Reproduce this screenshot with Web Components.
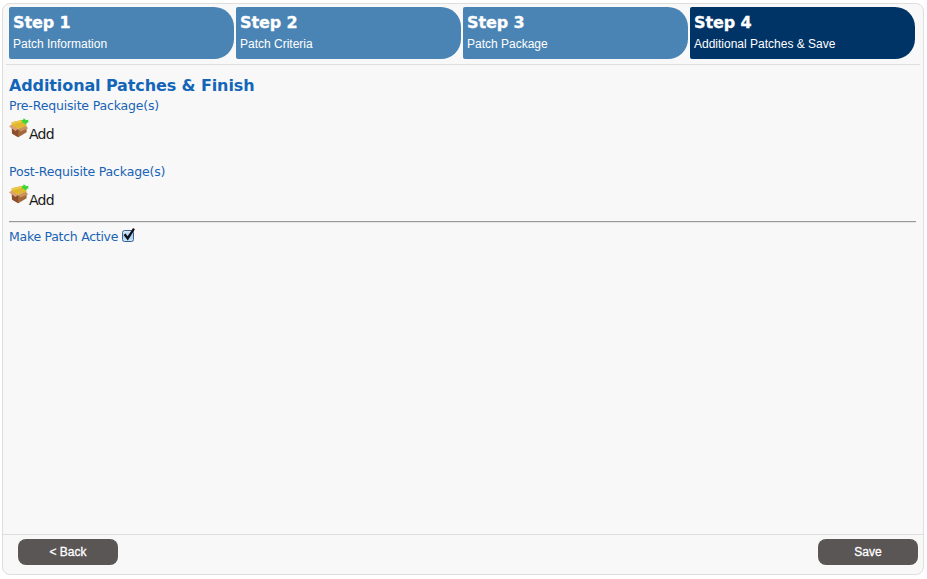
<!DOCTYPE html>
<html lang="en">
<head>
<meta charset="utf-8">
<title>Patch Wizard</title>
<style>
html,body{margin:0;height:100%;background:#fff}
body{font-family:"DejaVu Sans",sans-serif;overflow:hidden}
</style>
</head>
<body>
<wizard-frame>
  <wizard-step slot="steps" label="Step 1">Patch Information</wizard-step>
  <wizard-step slot="steps" label="Step 2">Patch Criteria</wizard-step>
  <wizard-step slot="steps" label="Step 3">Patch Package</wizard-step>
  <wizard-step slot="steps" label="Step 4" active>Additional Patches &amp; Save</wizard-step>
  <wizard-heading>Additional Patches &amp; Finish</wizard-heading>
  <package-list label="Pre-Requisite Package(s)">Add</package-list>
  <package-list label="Post-Requisite Package(s)">Add</package-list>
  <active-toggle>Make Patch Active</active-toggle>
  <wizard-button slot="footer">&lt; Back</wizard-button>
  <wizard-button slot="footer">Save</wizard-button>
</wizard-frame>
<script>
const define = (name, html) => customElements.define(name, class extends HTMLElement {
  connectedCallback() {
    if (this.shadowRoot) return;
    const root = this.attachShadow({mode: 'open'});
    root.innerHTML = html;
    const label = root.querySelector('.label');
    if (label) label.textContent = this.getAttribute('label');
  }
});

define('wizard-frame', `
<style>
:host{display:flex;flex-direction:column;box-sizing:border-box;width:922px;height:572px;margin:3px 0 0 2px;border:1px solid #dedede;border-radius:8px;background:#f8f8f8}
nav{display:flex;gap:2px;margin:0 3px;padding:3px 3px 5px;border-bottom:1px solid #dedede}
main{flex:1;padding:10px 7px 0 6px}
footer{display:flex;justify-content:space-between;box-sizing:border-box;height:40px;padding:4px 5px 0 15px;border-top:1px solid #dedede}
</style>
<nav><slot name="steps"></slot></nav>
<main><slot></slot></main>
<footer><slot name="footer"></slot></footer>`);

define('wizard-step', `
<style>
:host{display:block;box-sizing:border-box;width:225px;height:52px;padding:6px 4px 0;border-radius:2px 20px 20px 2px;background:#4a84b4;color:#fff;font:12px/14px "Liberation Sans",sans-serif;white-space:nowrap}
:host([active]){background:#003466}
.label{font:bold 16px/20px "DejaVu Sans",sans-serif;letter-spacing:-.12px;margin-bottom:4px;-webkit-text-stroke:.3px #fff}
</style>
<div class="label"></div><slot></slot>`);

define('wizard-heading', `
<style>
:host{display:block;font:bold 16px/22px "DejaVu Sans",sans-serif;letter-spacing:-.11px;color:#1366b7;white-space:nowrap}
</style>
<slot></slot>`);

define('package-list', `
<style>
:host{display:block;height:66px;white-space:nowrap}
.label{font-size:12.5px;line-height:18px;letter-spacing:-.17px;color:#1963b5}
.add{display:flex;align-items:flex-start;margin-top:3px;color:#1a1a1a;font-size:14px;line-height:18px;letter-spacing:-.75px}
svg{display:block;width:20px;height:20px}
.add span{margin-top:7px}
</style>
<div class="label"></div>
<div class="add">
<svg viewBox="0 0 20 20">
<path d="M2.4 4.2 13.5 1.8 17.8 8 4 9.5z" fill="#deb02b"/>
<path d="M2.8 9 9 11.5 17.6 8.5v5.8L9.3 19.2 3 15.6z" fill="#a5683a"/>
<path d="M2.8 9 9.2 11.5V19.2L3 15.6z" fill="#8c4f2b"/>
<path d="M0 8.5 2.8 6.2 9.2 10.6 6.6 13z" fill="#dca173"/>
<path d="M9.2 10.6 16.5 7.8 19.3 10.3 11.3 13.6z" fill="#cb935f"/>
<path d="M2.6 5.2 3.2 7.4 9.2 10.8 16.8 8 14 2.6z" fill="#e0b82f"/>
<path d="M2.6 4.4 13.5 1.9 14.2 3.8 3.2 6.2z" fill="#edc84c"/>
<path d="M14.2 .4 16.2 .9 16.6 2.2 19.6 1.7 19 3.4 20 4.2 17.8 4.8 17.3 6.4 15.4 5.8 15.3 4.5 12.4 4.7 13.5 3.2 12.2 2.3 14.3 2z" fill="#35d632"/>
</svg><span><slot></slot></span></div>`);

define('active-toggle', `
<style>
:host{display:block;font-size:12.5px;line-height:18px;letter-spacing:-.28px;color:#1963b5;white-space:nowrap}
hr{margin:-8px 0 4px;border:0;height:1px;background:#999;border-bottom:1px solid #e5e5e5}
.row{display:flex;align-items:flex-start;gap:3px}
.row span{margin-top:1px}
svg{display:block;width:15px;height:16px}
</style>
<hr>
<div class="row"><span><slot></slot></span>
<svg viewBox="0 0 15 16">
<defs><linearGradient id="g" x2="0" y2="1"><stop stop-color="#e3effb"/><stop offset=".5" stop-color="#a5cbef"/><stop offset="1" stop-color="#c9ebff"/></linearGradient></defs>
<rect x="1.5" y="3.5" width="11" height="11" rx="2" fill="url(#g)" stroke="#41608f"/>
<path d="M3.6 7.3 6.7 11.4 13 1.6" fill="none" stroke="#101218" stroke-width="2.3"/>
</svg></div>`);

define('wizard-button', `
<style>
:host{display:block;width:100px;height:26px;border-radius:8px;background:#5b5656;color:#fff;text-align:center;font:12px/26px "Liberation Sans",sans-serif;-webkit-text-stroke:.3px #fff}
</style>
<slot></slot>`);
</script>
</body>
</html>
